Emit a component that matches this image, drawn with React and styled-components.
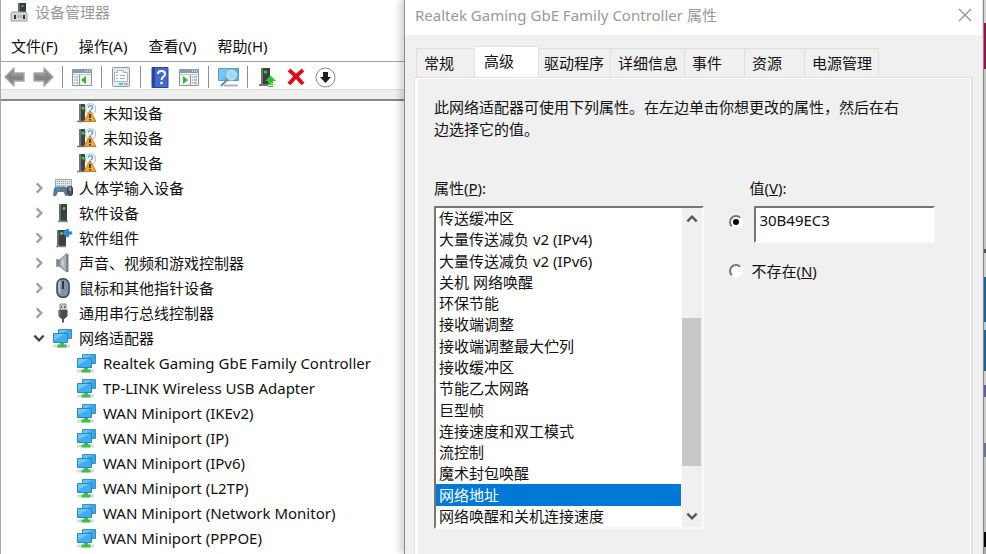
import React, { useState } from "react";
import styled, { createGlobalStyle } from "styled-components";

const GlobalStyle = createGlobalStyle`
  * { box-sizing: border-box; }
  body {
    margin: 0;
    overflow: hidden;
    background: #f0f0f0;
    color: #111;
    font: 15px/22px "Noto Sans", "Noto Sans CJK SC", sans-serif;
  }
  button, input { font: inherit; color: inherit; }
  svg { display: block; flex: none; }
`;

const Desktop = styled.div`
  display: grid;
  grid-template-columns: minmax(0, 404fr) minmax(0, 579fr) 3px;
  height: 100vh;
  overflow: hidden;
`;

/* ---------- device manager ---------- */

const Manager = styled.section`
  display: flex;
  flex-direction: column;
  min-width: 0;
  background: #fff;
  border-left: 1px solid #a8a8a8;
`;

const ManagerTitle = styled.header`
  display: flex;
  align-items: center;
  gap: 7px;
  height: 24px;
  padding-left: 9px;
  color: #999;
`;

const MenuBar = styled.nav`
  display: flex;
  align-items: center;
  gap: 21px;
  height: 37px;
  padding: 6px 0 0 10px;
`;

const MenuButton = styled.button`
  padding: 0;
  border: 0;
  background: none;
  white-space: nowrap;
`;

const Toolbar = styled.div`
  display: flex;
  align-items: center;
  gap: 9px;
  height: 28px;
  padding: 3px 0 0 3px;
  border-top: 1px solid #a0a5ab;
`;

const ToolButton = styled.button`
  display: grid;
  place-items: center;
  width: 20px;
  height: 22px;
  padding: 0;
  border: 0;
  background: none;
`;

const Divider = styled.span`
  width: 1px;
  height: 22px;
  background: #8f8f8f;
`;

const ToolbarEdge = styled.div`
  height: 12px;
  background: #f0f0f0;
  border-top: 1px solid #dcdcdc;
  border-bottom: 2px solid #868686;
`;

const Tree = styled.ul`
  flex: 1;
  margin: 0;
  padding: 0;
  list-style: none;
  overflow: hidden;
`;

const TreeRow = styled.li`
  display: flex;
  align-items: center;
  height: 25px;
  padding: 0 0 2px ${(p) => (p.$child ? 75 : 30)}px;
  white-space: nowrap;
`;

const Toggle = styled.button`
  display: grid;
  place-items: center;
  width: 15px;
  height: 20px;
  margin-right: 6px;
  padding: 0;
  border: 0;
  background: none;
`;

const RowIcon = styled.span`
  display: grid;
  place-items: center;
  width: 21px;
  margin-right: 6px;
`;

/* ---------- properties dialog ---------- */

const Dialog = styled.section`
  display: flex;
  flex-direction: column;
  min-width: 0;
  background: #f0f0f0;
  border-left: 1px solid #8c8c8c;
  border-right: 1px solid #e2e2e2;
  box-shadow: -4px 0 7px rgba(0, 0, 0, 0.18);
`;

const DialogTitle = styled.header`
  display: flex;
  align-items: center;
  justify-content: space-between;
  height: 35px;
  padding: 0 10px 6px;
  background: #fff;
  color: #999;
  white-space: nowrap;
`;

const CloseButton = styled.button`
  padding: 0;
  border: 0;
  background: none;
`;

const Tabs = styled.div`
  display: flex;
  align-items: flex-end;
  height: 42px;
  padding-left: 11px;
  white-space: nowrap;
`;

const Tab = styled.button`
  min-width: ${(p) => (p.$active ? 64 : p.$edge ? 59 : 60)}px;
  height: ${(p) => (p.$active ? 32 : 29)}px;
  margin-bottom: ${(p) => (p.$active ? -1 : 0)}px;
  padding: 0 6px ${(p) => (p.$active ? 4 : 1)}px ${(p) => (p.$active ? 9 : p.$tight ? 5 : 7)}px;
  border: solid #dfdfdf;
  border-width: 1px 1px 0 ${(p) => (p.$edge ? 1 : 0)}px;
  background: ${(p) => (p.$active ? "#fff" : "#f0f0f0")};
  text-align: left;
`;

const Panel = styled.div`
  flex: 1;
  min-height: 0;
  margin: 0 9px;
  padding: 18px 15px 0 17px;
  border: solid #e0e0e0;
  border-width: 1px 2px 0 1px;
  box-shadow: inset 3px 1px #fff, inset -1px 0 #fff;
`;

const Description = styled.p`
  max-width: 472px;
  margin: 0 0 37px;
  padding-left: 2px;
`;

const Fields = styled.div`
  display: grid;
  grid-template-columns: minmax(0, 271fr) minmax(0, 224fr);
  column-gap: 25px;
  padding: 0 3px 0 2px;
`;

const Caption = styled.label`
  display: block;
  height: 29px;
  padding-left: ${(p) => (p.$inset ? 20 : 0)}px;
`;

const ListFrame = styled.div`
  display: flex;
  height: 323px;
  background: #fff;
  border: 2px solid;
  border-color: #777 #f8f8f8 #f8f8f8 #777;
`;

const Options = styled.ul`
  flex: 1;
  display: grid;
  grid-auto-rows: 1fr;
  min-width: 0;
  margin: 0;
  padding: 0;
  list-style: none;
`;

const Option = styled.li`
  display: flex;
  align-items: center;
  min-height: 0;
  padding-left: 3px;
  line-height: 21px;
  white-space: nowrap;
  cursor: default;
  background: ${(p) => (p.$selected ? "#0078d7" : "transparent")};
  color: ${(p) => (p.$selected ? "#fff" : "inherit")};
`;

const ScrollBar = styled.div`
  display: flex;
  flex-direction: column;
  width: 20px;
  margin-left: 1px;
  background: #f0f0f0;
`;

const ScrollButton = styled.button`
  display: grid;
  place-items: center;
  height: 22px;
  padding: 0;
  border: 0;
  background: none;
`;

const ScrollTrack = styled.div`
  flex: 1;
  display: grid;
  grid-template-rows: 88fr 148fr 39fr;
`;

const ScrollThumb = styled.div`
  grid-row: 2;
  width: 19px;
  background: #c8c8c8;
`;

const RadioRow = styled.div`
  display: flex;
  align-items: ${(p) => (p.$field ? "flex-start" : "center")};
  gap: ${(p) => (p.$field ? 11 : 8)}px;
  height: ${(p) => (p.$field ? 37 : 22)}px;
  margin-bottom: 17px;
  padding-right: 18px;
`;

const Radio = styled.input`
  appearance: none;
  display: grid;
  place-items: center;
  flex: none;
  width: 14px;
  height: 14px;
  margin: ${(p) => (p.$field ? 9 : 0)}px 0 0;
  border: 2px solid;
  border-color: #777 #fafafa #fafafa #777;
  border-radius: 50%;
  background: #fff;
  &:checked::before {
    content: "";
    width: 6px;
    height: 6px;
    border-radius: 50%;
    background: #000;
  }
`;

const ValueInput = styled.input`
  flex: 1;
  min-width: 0;
  height: 37px;
  padding: 0 0 10px 3px;
  border: 2px solid;
  border-color: #777 #fafafa #fafafa #777;
  border-radius: 0;
  background: #fff;
  outline: 0;
`;

const BackWindow = styled.div`
  display: flex;
  flex-direction: column;
  border-left: 1px solid #888;
`;

const Band = styled.span`
  flex: ${(p) => p.$size} 0 0;
  background: ${(p) => p.$tone};
`;

/* ---------- drawings ---------- */

const ManagerIcon = () => (
  <svg width="18" height="20" viewBox="0 0 18 20">
    <path d="M8 1h8v10H8z" fill="#363b3b" />
    <path d="M8 1h2v10H8z" fill="#666" />
    <circle cx="12.5" cy="4" r="1" fill="#3ee344" />
    <path d="M2 10h14l1 2v7H1v-7z" fill="#d4d6d8" stroke="#999fa3" />
    <path d="M4 13h2v4H4zM13 13h2v4h-2z" fill="#333" />
    <path d="M7 13h5v3H7z" fill="#b5b9bc" />
  </svg>
);

const ArrowIcon = ({ forward }) => (
  <svg width="21" height="20" viewBox="0 0 21 20">
    <path
      d={forward ? "M20 10 11 1v5H1v8h10v5z" : "M1 10l9-9v5h10v8H10v5z"}
      fill="#858585" stroke="#aaa" strokeWidth="1.5" strokeLinejoin="round"
    />
    <path d={forward ? "M3 8h10V5" : "M18 8H8V5"} fill="none" stroke="#a8a8a8" />
  </svg>
);

const WindowIcon = ({ mirrored }) => (
  <svg width="20" height="18" viewBox="0 0 20 18">
    <path d="M.5 1.5h19v16H.5z" fill="#f1f3f5" stroke="#8998a6" />
    <path d="M1 2h18v3H1z" fill="#8b9cac" />
    <path d="M13 3h1m1 0h1m1 0h1" stroke="#fff" />
    <path d="M1 6.5h18" stroke="#c3ccd4" />
    {mirrored ? (
      <>
        <path d="M11.5 7v10" stroke="#8998a6" />
        <path d="M13 9h1m1 0h3m-5 3h1m1 0h3m-5 3h1m1 0h3" stroke="#718ba5" />
        <path d="M4 8l5 4-5 4z" fill="#38b52c" />
      </>
    ) : (
      <>
        <path d="M7.5 7v10" stroke="#8998a6" />
        <path d="M2 9h1m1 0h2m-4 3h1m1 0h2m-4 3h1m1 0h2" stroke="#718ba5" />
        <path d="M14 8l-5 4 5 4z" fill="#38b52c" />
      </>
    )}
  </svg>
);

const PropertiesIcon = () => (
  <svg width="20" height="20" viewBox="0 0 20 20">
    <rect x="1.5" y=".5" width="17" height="19" rx="1" fill="#e7eaed" stroke="#8f959b" />
    <path d="M3.5 5.500h3v-2h6v2h4v9h-13z" fill="#fff" stroke="#a9b6c2" />
    <path d="M5 8.500h2m2 0h5M5 11.500h2m2 0h5" stroke="#9aaaba" />
    <path d="M8 17h4" stroke="#33c6ee" strokeWidth="2" />
    <path d="M13 17h4" stroke="#aab1b7" strokeWidth="2" />
  </svg>
);

const HelpIcon = () => (
  <svg width="18" height="21" viewBox="0 0 18 21">
    <path d="M1 .5h16v20H1z" fill="#4169cf" stroke="#2d4796" />
    <path d="M1 1h3v19H1z" fill="#29469f" />
    <path d="M7 7c0-4 7-4 7 0 0 3-3.500 2.500-3.500 6" fill="none" stroke="#fff" strokeWidth="2" />
    <circle cx="10.500" cy="16" r="1.300" fill="#fff" />
  </svg>
);

const ScanIcon = () => (
  <svg width="21" height="20" viewBox="0 0 21 20">
    <path d="M.5 1.500h20v12H.5z" fill="#58b5ea" stroke="#5a9cc6" />
    <path d="M1 2h13L4 13H1z" fill="#75c8f5" />
    <path d="M6 18.500h14" stroke="#a4b4be" strokeWidth="2" />
    <path d="M10 12l-7 7" stroke="#718997" strokeWidth="2" />
    <circle cx="13.500" cy="8" r="5" fill="#a0d9f6" stroke="#c3e2f2" strokeWidth="1.500" />
    <circle cx="13.500" cy="8" r="5.800" fill="none" stroke="#7299b0" strokeWidth=".5" />
  </svg>
);

const UpdateIcon = () => (
  <svg width="18" height="20" viewBox="0 0 18 20">
    <path d="M3 1h9v17H3z" fill="#3d4040" />
    <path d="M3 1h2v17H3z" fill="#707373" />
    <path d="M1 18h9" stroke="#777" strokeWidth="2" />
    <circle cx="7.500" cy="5" r="1.500" fill="#35e340" />
    <path d="M12.500 8.500l5.500 5.500h-3v2.500h-5v-2.500H7z" fill="#29c62e" />
    <path d="M10 17.500h5M10 19.500h5" stroke="#29c62e" />
  </svg>
);

const RemoveIcon = () => (
  <svg width="18" height="18" viewBox="0 0 18 18">
    <path d="M2 2c5 4 9 8 14 14M16 2C11 6 7 10 2 16" stroke="#df0b1b" strokeWidth="4" />
  </svg>
);

const DisableIcon = () => (
  <svg width="21" height="21" viewBox="0 0 21 21">
    <circle cx="10.500" cy="10.500" r="9.500" fill="#fff" stroke="#888" />
    <path d="M8 5h5v5h3l-5.500 6L5 10h3z" fill="#1d1d1d" />
  </svg>
);

const UnknownIcon = () => (
  <svg width="20" height="20" viewBox="0 0 20 20">
    <path d="M2 1h6v17H2z" fill="#404443" />
    <path d="M2 1h2v17H2z" fill="#727675" />
    <path d="M0 18.500h8" stroke="#777" strokeWidth="1.500" />
    <circle cx="6" cy="5" r="1.500" fill="#36df41" />
    <circle cx="13.500" cy="6" r="5.300" fill="#f3f6f8" stroke="#b4b8ba" />
    <path d="M11.500 4.500c0-2.500 4-2.500 4 0 0 1.500-1 1.500-1.500 2.500" fill="none" stroke="#4a9fd6" strokeWidth="1.300" />
    <path d="M13 7.500l6 11H7z" fill="#f0a830" stroke="#c0801f" />
    <path d="M13 11v4m0 1v1.500" stroke="#352000" strokeWidth="1.600" />
  </svg>
);

const HidIcon = () => (
  <svg width="20" height="19" viewBox="0 0 20 19">
    <path d="M2.500 1.500h16v8h-16z" fill="#e4e7e9" stroke="#9ba7b0" />
    <path d="M4 3.500h13M4 5.500h13M4 7.500h13" stroke="#8e9ca7" strokeDasharray="1 1" />
    <path d="M1 10l3-1.500h8l2 1.500.5 8h-2l-2-4H5l-2 4H0z" fill="#607887" />
    <circle cx="5.500" cy="10.500" r="2" fill="#269ce0" />
    <circle cx="9.500" cy="11" r="1" fill="#e64d3e" />
    <rect x="14.500" y="8.500" width="5" height="9" rx="2" fill="#4d5960" stroke="#303b42" />
    <path d="M17 9v4" stroke="#c5d0d6" />
  </svg>
);

const TowerIcon = ({ part }) => (
  <svg width="20" height="20" viewBox="0 0 20 20">
    <path d={part ? "M4 2h9v16H4z" : "M6 1h8v17H6z"} fill="#3d4140" />
    <path d={part ? "M4 2h2v16H4z" : "M6 1h2v17H6z"} fill="#686c6b" />
    <path d={part ? "M3 18.500h10" : "M5 18.500h10"} stroke="#858989" strokeWidth="1.500" />
    <circle cx={part ? 8.5 : 11} cy="5.500" r="1.400" fill="#3be44b" />
    {part && <path d="M13 1h3v2.500h3v3h-3V9h-3V6.500h-2v-3h2z" fill="#2688c9" stroke="#75bde8" strokeWidth=".6" />}
  </svg>
);

const SoundIcon = () => (
  <svg width="20" height="20" viewBox="0 0 20 20">
    <path d="M3.500 6.500h3v7h-3z" fill="#7c868d" stroke="#9aa2a8" />
    <path d="M7 6.500l6.500-6v18.500L7 13.500z" fill="#adb5ba" stroke="#858e95" />
    <path d="M8.500 8l2-2v8l-2-2z" fill="#d3d8db" />
    <path d="M14.500 1v18" stroke="#788188" strokeWidth="2" />
  </svg>
);

const MouseIcon = () => (
  <svg width="20" height="20" viewBox="0 0 20 20">
    <rect x="4" y=".8" width="12" height="18.500" rx="5.500" fill="#8494a2" stroke="#3d444c" strokeWidth="1.500" />
    <path d="M7 3c-1 2-1 8 0 12" stroke="#b8c5cf" strokeWidth="2" fill="none" />
    <path d="M10 3v8" stroke="#303840" strokeWidth="2" />
  </svg>
);

const UsbIcon = () => (
  <svg width="20" height="20" viewBox="0 0 20 20">
    <path d="M7 1h6v6H7z" fill="#ccd0d0" stroke="#838989" />
    <path d="M8.500 3v2m3-2v2" stroke="#555" />
    <path d="M5.500 7h9v6l-3 3h-3l-3-3z" fill="#474d4d" />
    <path d="M7 8v5" stroke="#7e8484" />
    <path d="M10 15v4.500" stroke="#555" strokeWidth="2" />
  </svg>
);

const NetworkIcon = () => (
  <svg width="21" height="20" viewBox="0 0 21 20">
    <path d="M6.500 1.500h13v9h-13z" fill="#38a9ec" stroke="#3b8fc2" />
    <path d="M7 2h9l-9 5z" fill="#62c0f6" />
    <path d="M1 18h17" stroke="#d5dcd9" strokeWidth="3" />
    <path d="M8 14h4v2.500h2.500V19.500h-9V16.500H8z" fill="#3cc04b" />
    <path d="M1.500 5.500h14v9h-14z" fill="#3fadf2" stroke="#3583b3" />
    <path d="M2 6h11L2 12z" fill="#6cc7fa" />
  </svg>
);

const Chevron = ({ dir, tone = "#555" }) => {
  const paths = { right: "M4 2l4 4-4 4", down: "M2 4l4 4 4-4", up: "M2 8l4-4 4 4" };
  return (
    <svg width="14" height="14" viewBox="0 0 12 12" fill="none">
      <path d={paths[dir]} stroke={tone} strokeWidth="2" />
    </svg>
  );
};

/* ---------- data ---------- */

const menus = ["文件(F)", "操作(A)", "查看(V)", "帮助(H)"];

const tools = [
  ["后退", <ArrowIcon />],
  ["前进", <ArrowIcon forward />],
  null,
  ["显示/隐藏控制台树", <WindowIcon />],
  null,
  ["属性", <PropertiesIcon />],
  null,
  ["帮助", <HelpIcon />],
  ["显示/隐藏操作窗格", <WindowIcon mirrored />],
  null,
  ["扫描检测硬件改动", <ScanIcon />],
  null,
  ["更新驱动程序", <UpdateIcon />],
  ["卸载设备", <RemoveIcon />],
  ["禁用设备", <DisableIcon />],
];

const unknownDevices = ["未知设备", "未知设备", "未知设备"];

const categories = [
  ["人体学输入设备", <HidIcon />],
  ["软件设备", <TowerIcon />],
  ["软件组件", <TowerIcon part />],
  ["声音、视频和游戏控制器", <SoundIcon />],
  ["鼠标和其他指针设备", <MouseIcon />],
  ["通用串行总线控制器", <UsbIcon />],
  ["网络适配器", <NetworkIcon />, true],
];

const adapters = [
  "Realtek Gaming GbE Family Controller",
  "TP-LINK Wireless USB Adapter",
  "WAN Miniport (IKEv2)",
  "WAN Miniport (IP)",
  "WAN Miniport (IPv6)",
  "WAN Miniport (L2TP)",
  "WAN Miniport (Network Monitor)",
  "WAN Miniport (PPPOE)",
];

const tabs = ["常规", "高级", "驱动程序", "详细信息", "事件", "资源", "电源管理"];

const properties = [
  "传送缓冲区",
  "大量传送减负 v2 (IPv4)",
  "大量传送减负 v2 (IPv6)",
  "关机 网络唤醒",
  "环保节能",
  "接收端调整",
  "接收端调整最大伫列",
  "接收缓冲区",
  "节能乙太网路",
  "巨型帧",
  "连接速度和双工模式",
  "流控制",
  "魔术封包唤醒",
  "网络地址",
  "网络唤醒和关机连接速度",
];

const bands = [
  [23, "#d5d5d5"], [46, "#9b0f4c"], [180, "#c4c4c4"], [4, "#4a5365"], [24, "#d0d0d0"],
  [45, "#1763a0"], [8, "#b9cbd8"], [41, "#1763a0"], [14, "#cfcfcf"], [12, "#6a57a5"],
  [46, "#cccccc"], [14, "#6b7696"], [75, "#c2c2c2"], [15, "#050505"], [7, "#aaaaaa"],
];

function DeviceRow({ icon, label }) {
  return (
    <TreeRow $child role="treeitem">
      <RowIcon>{icon}</RowIcon>
      {label}
    </TreeRow>
  );
}

export default function App() {
  const [selected, setSelected] = useState("网络地址");
  const [present, setPresent] = useState(true);

  return (
    <>
      <GlobalStyle />
      <Desktop>
        <Manager>
          <ManagerTitle>
            <ManagerIcon />
            设备管理器
          </ManagerTitle>
          <MenuBar>
            {menus.map((m) => <MenuButton key={m}>{m}</MenuButton>)}
          </MenuBar>
          <Toolbar>
            {tools.map((tool, i) =>
              tool ? (
                <ToolButton key={i} aria-label={tool[0]}>{tool[1]}</ToolButton>
              ) : (
                <Divider key={i} />
              )
            )}
          </Toolbar>
          <ToolbarEdge />
          <Tree role="tree">
            {unknownDevices.map((d, i) => <DeviceRow key={i} icon={<UnknownIcon />} label={d} />)}
            {categories.map(([label, icon, open]) => (
              <TreeRow key={label} role="treeitem" aria-expanded={!!open}>
                <Toggle aria-label={label}>
                  <Chevron dir={open ? "down" : "right"} tone={open ? "#444" : "#a0a0a0"} />
                </Toggle>
                <RowIcon>{icon}</RowIcon>
                {label}
              </TreeRow>
            ))}
            {adapters.map((d) => <DeviceRow key={d} icon={<NetworkIcon />} label={d} />)}
          </Tree>
        </Manager>

        <Dialog>
          <DialogTitle>
            Realtek Gaming GbE Family Controller 属性
            <CloseButton aria-label="关闭">
              <svg width="14" height="14" viewBox="0 0 14 14">
                <path d="M1 1l12 12M13 1L1 13" stroke="#929292" strokeWidth="1.300" />
              </svg>
            </CloseButton>
          </DialogTitle>
          <Tabs role="tablist">
            {tabs.map((t, i) => (
              <Tab key={t} role="tab" aria-selected={i === 1} $active={i === 1} $edge={i === 0} $tight={i === 2}>
                {t}
              </Tab>
            ))}
          </Tabs>
          <Panel role="tabpanel">
            <Description>
              此网络适配器可使用下列属性。在左边单击你想更改的属性，然后在右边选择它的值。
            </Description>
            <Fields>
              <div>
                <Caption as="div" id="property-label">属性(<u>P</u>):</Caption>
                <ListFrame>
                  <Options role="listbox" aria-labelledby="property-label">
                    {properties.map((p) => (
                      <Option
                        key={p}
                        role="option"
                        aria-selected={p === selected}
                        $selected={p === selected}
                        onClick={() => setSelected(p)}
                      >
                        {p}
                      </Option>
                    ))}
                  </Options>
                  <ScrollBar>
                    <ScrollButton aria-label="向上滚动"><Chevron dir="up" /></ScrollButton>
                    <ScrollTrack><ScrollThumb /></ScrollTrack>
                    <ScrollButton aria-label="向下滚动"><Chevron dir="down" /></ScrollButton>
                  </ScrollBar>
                </ListFrame>
              </div>
              <div>
                <Caption htmlFor="value" $inset>值(<u>V</u>):</Caption>
                <RadioRow $field>
                  <Radio $field type="radio" name="mode" aria-label="值" checked={present} onChange={() => setPresent(true)} />
                  <ValueInput id="value" defaultValue="30B49EC3" />
                </RadioRow>
                <RadioRow>
                  <Radio type="radio" name="mode" id="absent" checked={!present} onChange={() => setPresent(false)} />
                  <label htmlFor="absent">不存在(<u>N</u>)</label>
                </RadioRow>
              </div>
            </Fields>
          </Panel>
        </Dialog>

        <BackWindow aria-hidden="true">
          {bands.map(([size, tone], i) => <Band key={i} $size={size} $tone={tone} />)}
        </BackWindow>
      </Desktop>
    </>
  );
}
